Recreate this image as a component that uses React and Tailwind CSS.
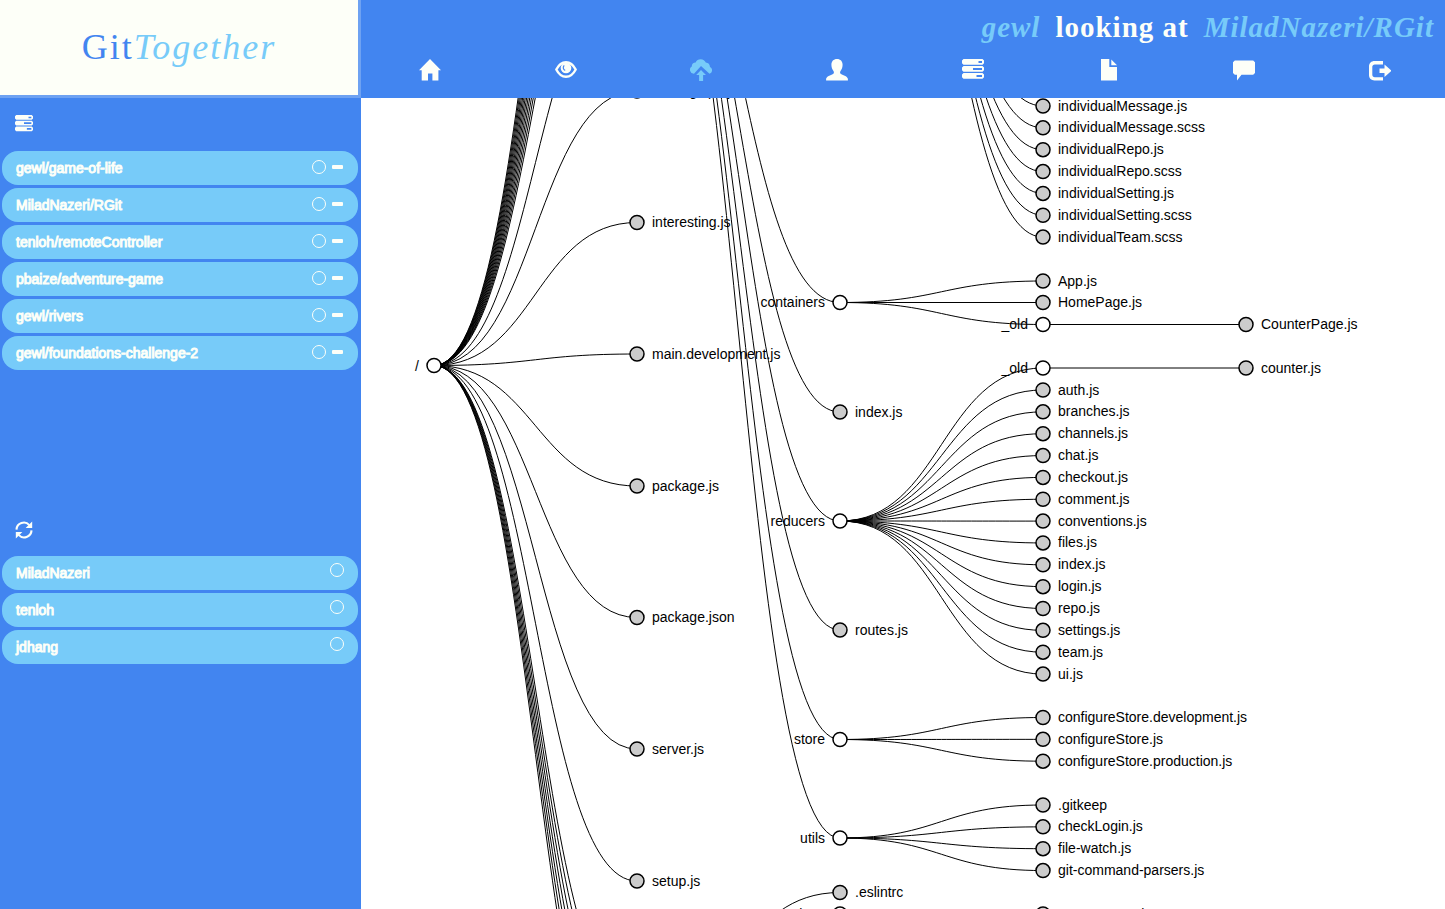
import React from "react";

const STEP = 203;
const col = (n) => 73 + STEP * n;

const nodes = [];
const links = [];

function link(d, y1, y2) {
  const a = col(d);
  const b = col(d + 1);
  const m = (a + b) / 2;
  links.push(y1 === y2 ? `M${a},${y1}H${b}` : `M${a},${y1}C${m},${y1} ${m},${y2} ${b},${y2}`);
}
function add(depth, y, name, parentY, folder = false) {
  link(depth - 1, parentY, y);
  nodes.push({ x: col(depth), y, name, folder });
}

const HEADER = 98;
const U = 21.85;
const y = (v) => v - HEADER;
const ROOT = y(365.5);
const APP = y(-172);
const COMPONENTS = y(-370);
const TEST = y(1012.5);

// Branches whose far ends are scrolled out above and below the view
for (let i = 0; i <= 12; i++) link(0, ROOT, APP - i * U);
link(0, ROOT, y(-40.5));
for (let i = 0; i <= 6; i++) link(0, ROOT, TEST + i * U);

add(1, y(91), "holding.spa.js", ROOT);
add(1, y(222.5), "interesting.js", ROOT);
add(1, y(354), "main.development.js", ROOT);
add(1, y(486), "package.js", ROOT);
add(1, y(617.5), "package.json", ROOT);
add(1, y(749), "server.js", ROOT);
add(1, y(881), "setup.js", ROOT);

["individualMessage.js", "individualMessage.scss", "individualRepo.js", "individualRepo.scss", "individualSetting.js", "individualSetting.scss", "individualTeam.scss"].forEach((n, i) => add(3, y(106 + i * U), n, COMPONENTS));

add(2, y(302.5), "containers", APP, true);
add(3, y(281), "App.js", y(302.5));
add(3, y(302.5), "HomePage.js", y(302.5));
add(3, y(324.5), "_old", y(302.5), true);
add(4, y(324.5), "CounterPage.js", y(324.5));

add(2, y(412), "index.js", APP);
add(2, y(521), "reducers", APP, true);
add(3, y(368), "_old", y(521), true);
add(4, y(368), "counter.js", y(368));
["auth.js", "branches.js", "channels.js", "chat.js", "checkout.js", "comment.js", "conventions.js", "files.js", "index.js", "login.js", "repo.js", "settings.js", "team.js", "ui.js"].forEach((n, i) => add(3, y(390 + i * U), n, y(521)));

add(2, y(630), "routes.js", APP);
add(2, y(739.5), "store", APP, true);
["configureStore.development.js", "configureStore.js", "configureStore.production.js"].forEach((n, i) => add(3, y(717.5 + i * U), n, y(739.5)));
add(2, y(838), "utils", APP, true);
[".gitkeep", "checkLogin.js", "file-watch.js", "git-command-parsers.js"].forEach((n, i) => add(3, y(805 + i * U), n, y(838)));

add(2, y(892.5), ".eslintrc", TEST);
add(2, y(914), "actions", TEST, true);
add(3, y(914), "counter.spec.js", y(914));

function Tree() {
  return (
    <svg className="block h-full w-full" role="img" aria-label="Repository file tree" fontFamily='"Liberation Sans", Arial, sans-serif' fontSize="14">
      <g fill="none" stroke="#000" strokeWidth="1">
        {links.map((d, i) => <path key={i} d={d} />)}
      </g>
      {nodes.map((n, i) => (
        <g key={i}>
          <circle cx={n.x} cy={n.y} r="7" fill={n.folder ? "#fff" : "#ccc"} stroke="#000" strokeWidth="1.5" />
          <text x={n.folder ? n.x - 15 : n.x + 15} y={Math.floor(n.y) + 5} textAnchor={n.folder ? "end" : "start"}>{n.name}</text>
        </g>
      ))}
      <text x={col(0) - 15} y={ROOT + 5} textAnchor="end">/</text>
      <circle cx={col(0)} cy={ROOT} r="7" fill="#fff" stroke="#000" strokeWidth="1.5" />
    </svg>
  );
}

const Svg = ({ className = "size-[22px]", children }) => (
  <svg className={className} viewBox="0 0 22 22" fill="currentColor" aria-hidden="true">{children}</svg>
);

const Home = () => <Svg><path d="M11 0 0 11.300h2.700V21.500h6.300v-7h4.400v7h6V11.300H22z" /></Svg>;
const Eye = () => (
  <Svg>
    <path d="M1.300 10.500C3.800 5.600 7.200 3.200 11 3.200s7.200 2.400 9.700 7.300C18.200 15.400 14.800 17.800 11 17.800S3.800 15.400 1.300 10.500z" fill="none" stroke="currentColor" strokeWidth="2.400" strokeLinejoin="round" />
    <circle cx="11" cy="9" r="5.300" />
    <path d="M9.200 6.400C7.500 8.400 8.300 10.900 10.200 11.300" fill="none" stroke="#4285f0" strokeWidth="1.200" />
  </Svg>
);
const Cloud = () => (
  <Svg>
    <path d="M4 14.700a3.900 3.900 0 0 1-2.200-7.200A3.800 3.800 0 0 1 5.600 3.400 5.600 5.600 0 0 1 15.800 3.600a4.800 4.800 0 0 1 4.200 4.400 3.600 3.600 0 0 1-.5 6.700L11 7z" />
    <path d="M11 11 6.200 16h2.900v6h4v-6h2.900z" />
  </Svg>
);
const User = () => <Svg><path d="M11 0C7.500 0 5.400 2.300 5.400 5.800c0 2.500.8 4.700 1.900 6 .7.900.9 2.300.1 2.900C5.600 15.900.6 17.100.1 19.800V21.500h21.800v-1.700c-.5-2.700-5.500-3.900-7.300-5.100-.8-.6-.6-2 .1-2.900 1.100-1.300 1.900-3.500 1.900-6C16.600 2.300 14.500 0 11 0z" /></Svg>;
const Tasks = ({ className }) => (
  <Svg className={className}>
    <path fillRule="evenodd" d="M1.500 0h19L22 1.500v2.800l-1.500 1.500h-19L0 4.300V1.500zM16.500 2v2h3.500V2zM1.500 7h19L22 8.500v2.800l-1.500 1.500h-19L0 11.300V8.500zM11 9v2h9V9zM1.500 14h19l1.500 1.500v2.800l-1.500 1.500h-19L0 18.300v-2.800zM14.500 16v2H20v-2z" />
  </Svg>
);
const File = () => <Svg><path d="M3 0h8.300v8H19v13.500H3zM13.300.5 19 6.300h-5.700z" /></Svg>;
const Comment = () => <Svg><path d="M1.800 1.500h18.400L22 3.300v10.700l-1.800 1.700H8.500L4 21.500v-5.800H1.800L0 14V3.300z" /></Svg>;
const LogOut = () => <Svg><path d="M14 2H5.500C2.300 2 0 4.200 0 7.300v9c0 3.100 2.300 5.200 5.500 5.200H14v-3.300H5.800c-1.500 0-2.500-1-2.500-2.400V7.800c0-1.400 1-2.400 2.500-2.400H14zM10.500 9.500h5v-4l7 6.300-7 6.200v-4h-5z" /></Svg>;
const Refresh = ({ className }) => (
  <Svg className={className}>
    <path d="M1.800 10.500A9 9 0 0 1 17.500 5M20.200 11.500A9 9 0 0 1 4.500 17" fill="none" stroke="currentColor" strokeWidth="2.600" />
    <path d="M21 .5v8h-8zM1 21.500v-8h8z" />
  </Svg>
);

const NAV = [["Home", Home], ["Watch", Eye], ["Upload", Cloud], ["Profile", User], ["Tasks", Tasks], ["Files", File], ["Chat", Comment], ["Log out", LogOut]];
const REPOS = ["gewl/game-of-life", "MiladNazeri/RGit", "tenloh/remoteController", "pbaize/adventure-game", "gewl/rivers", "gewl/foundations-challenge-2"];
const TEAM = ["MiladNazeri", "tenloh", "jdhang"];

function Pill({ name, removable }) {
  return (
    <li className="flex h-[34px] items-center justify-between rounded-2xl bg-[#77cbf9] px-[14px]">
      <a href="#" className="text-sm text-[#fdfff8] [-webkit-text-stroke:1px_#fdfff8]">{name}</a>
      <span className={removable ? "flex items-center gap-[6px] pr-px pb-[2px]" : "flex items-center pb-[6px]"}>
        <button aria-label={`Select ${name}`} className="size-[14px] rounded-full border border-[#fdfff8]" />
        {removable && <button aria-label={`Remove ${name}`} className="h-[4px] w-[11px] rounded-[1px] bg-[#fdfff8]" />}
      </span>
    </li>
  );
}

export default function App() {
  return (
    <div className="flex h-screen overflow-hidden bg-white font-['Liberation_Sans',Arial,sans-serif]">
      <aside className="flex w-[361px] shrink-0 flex-col bg-[#4285f0]">
        <h1 className="flex h-[98px] shrink-0 items-center justify-center border-r-3 border-b-3 border-[#6ea2f2] bg-[#fdfff8] pb-[2px] font-['Liberation_Serif',serif] text-[36px] tracking-[2px] text-[#4285f0]">
          Git<em className="text-[#77cbf9]">Together</em>
        </h1>
        <section className="h-[407px] pr-[3px] pl-[2px]">
          <div className="flex h-[53px] items-center pb-[2px] pl-[13px] text-[#fdfff8]"><Tasks className="size-[18px]" /></div>
          <ul className="flex flex-col gap-[3px]">{REPOS.map((r) => <Pill key={r} name={r} removable />)}</ul>
        </section>
        <section className="pr-[3px] pl-[2px]">
          <div className="flex h-[51px] items-center pb-[2px] pl-[13px] text-[#fdfff8]"><Refresh className="size-[18px]" /></div>
          <ul className="flex flex-col gap-[3px]">{TEAM.map((r) => <Pill key={r} name={r} />)}</ul>
        </section>
      </aside>
      <main className="flex min-w-0 flex-1 flex-col">
        <header className="flex h-[98px] shrink-0 flex-col bg-[#4285f0] text-[#fdfff8]">
          <p className="flex h-[54px] items-center justify-end gap-[15px] pt-[2px] pr-[11px] font-['Liberation_Serif',serif] text-[29px] font-bold tracking-[1px]">
            <em className="text-[#77cbf9]">gewl</em>
            <span>looking at</span>
            <em className="text-[#77cbf9]">MiladNazeri/RGit</em>
          </p>
          <nav className="-mr-[3px] grid grid-cols-8 pl-px">
            {NAV.map(([label, Icon]) => (
              <a key={label} href="#" aria-label={label} className={label === "Upload" ? "flex h-8 items-center justify-center text-[#77cbf9]" : "flex h-8 items-center justify-center"}><Icon /></a>
            ))}
          </nav>
        </header>
        <div className="min-h-0 flex-1"><Tree /></div>
      </main>
    </div>
  );
}
